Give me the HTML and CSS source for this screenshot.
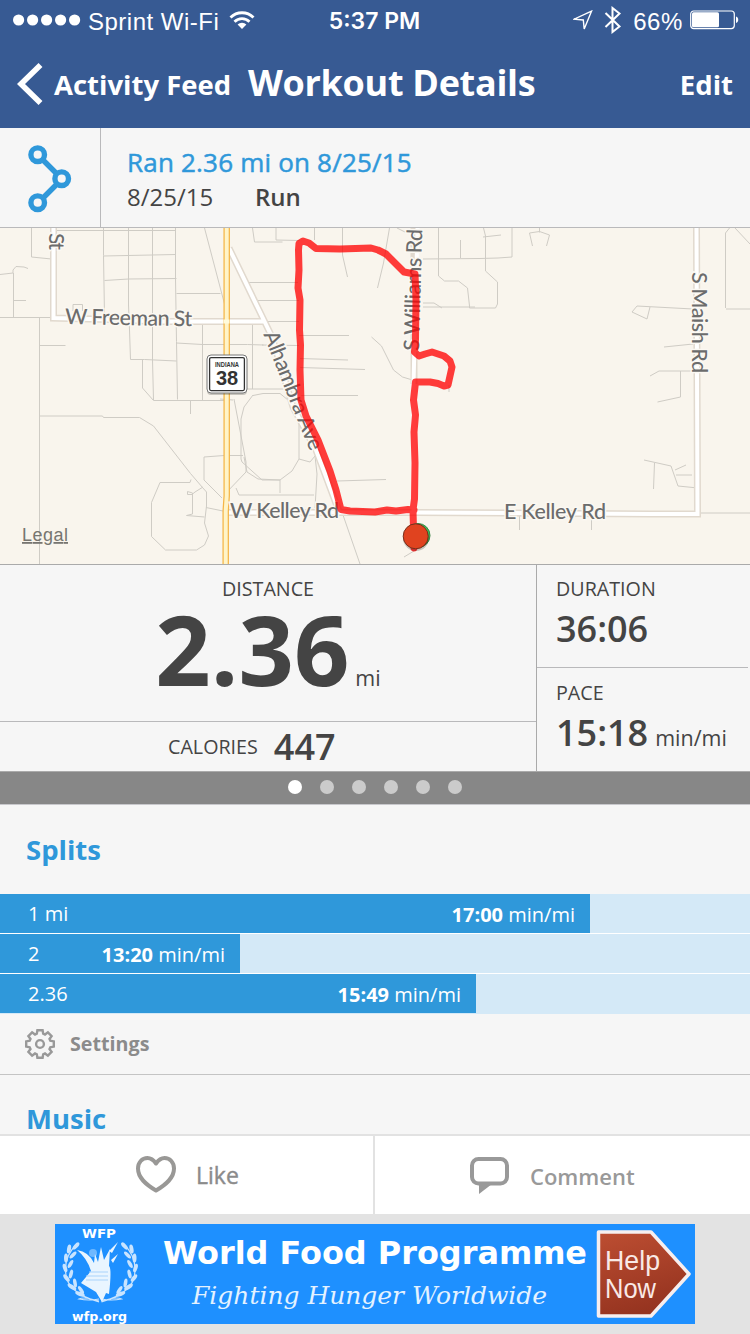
FILE: index.html
```
<!DOCTYPE html>
<html lang="en">
<head>
<meta charset="UTF-8" />
<meta name="viewport" content="width=device-width, initial-scale=1" />
<title>Workout Details</title>
<link rel="stylesheet" href="styles.css">
</head>
<body>

<header>
  <div class="status-bar">
    <div class="status-left">
      <svg class="signal" width="68" height="12" viewBox="0 0 68 12" fill="#fff">
        <circle cx="5.6" cy="6" r="5.6"/><circle cx="19.6" cy="6" r="5.6"/><circle cx="33.6" cy="6" r="5.6"/><circle cx="47.6" cy="6" r="5.6"/><circle cx="61.6" cy="6" r="5.6"/>
      </svg>
      <span class="carrier">Sprint Wi-Fi</span>
      <svg width="26" height="20" viewBox="0 0 26 20" fill="none" stroke="#fff" stroke-width="2.8">
        <path d="M1.5 7.5a16.3 16.3 0 0 1 23 0"/>
        <path d="M5.5 11.8a10.6 10.6 0 0 1 15 0"/>
        <path d="M13 19l-4.4-4.4a6.3 6.3 0 0 1 8.8 0z" fill="#fff" stroke="none"/>
      </svg>
    </div>
    <div class="clock">5:37 PM</div>
    <div class="status-right">
      <svg width="20" height="21" viewBox="0 0 20 21" fill="none" stroke="#fff" stroke-width="1.4">
        <path d="M18.5 1.2L1 9.2l9.3.8.9 9z"/>
      </svg>
      <svg width="18" height="28" viewBox="0 0 18 28" fill="none" stroke="#fff" stroke-width="2">
        <path d="M1.5 7l14 13.5-7 5.5V2l7 5.5L1.5 21"/>
      </svg>
      <span class="percent">66%</span>
      <svg width="49" height="20" viewBox="0 0 49 20">
        <rect x=".7" y="1" width="43.6" height="17.6" rx="3" fill="none" stroke="#fff" stroke-width="1.2"/>
        <rect x="2" y="2.3" width="27" height="15" rx="1.5" fill="#fff"/>
        <path d="M46 6.5c3 .5 3 6 0 6.500z" fill="#fff"/>
      </svg>
    </div>
  </div>
  <nav class="nav-bar">
    <a class="back">
      <svg width="27" height="42" viewBox="0 0 27 42" fill="none" stroke="#fff" stroke-width="5.6">
        <path d="M23.500 2L4 21l19.500 19"/>
      </svg>
      <span>Activity Feed</span>
    </a>
    <h1>Workout Details</h1>
    <a class="edit">Edit</a>
  </nav>
</header>

<section class="summary">
  <div class="summary-icon">
    <svg width="44" height="68" viewBox="0 0 44 68" fill="none" stroke="#2f98da" stroke-width="5.4">
      <path d="M14.500 14.500l14.500 14.500M29 39L14.500 53.500"/>
      <circle cx="9.700" cy="9.700" r="6.800"/><circle cx="33.700" cy="33.700" r="6.800"/><circle cx="9.700" cy="57.700" r="6.800"/>
    </svg>
  </div>
  <div class="summary-text">
    <h2>Ran 2.36 mi on 8/25/15</h2>
    <p><span class="date">8/25/15</span><span class="type">Run</span></p>
  </div>
</section>

<section class="map">
  <svg width="750" height="336" viewBox="0 228 750 336">
    <!-- minor streets -->
    <g class="minor">
      <path d="M31.500 228v29l20 2M0 274.500l13-1.500v-3l3-3.500 8 .5 4 1.500M13.500 273v44M13 300.500h13M0 317.500h52M39.500 318v246M39.500 345.500h26M73 311v-6.500h9.500v6.500"/>
      <path d="M57 230.500h118.500M103.500 228v27.500l1 60M128.500 228v77l1 25 1 29.500M152.500 228v132l1 40M175.500 228v50.500l1 63 1 58M103.500 256l72-1.500M104.500 280.500l24-1.500 48-.5M176.500 293.500h44M204.500 228l20 76M130.500 359.500h14l32 1.500M142.500 360v28l11 12.500h71M176.500 343l26 1.500h45l16 .5M202.500 322v78M190.500 401v13"/>
      <path d="M39.500 416h63l1 1.500h36l14 8.500 37 47.500 12 14 4 4.500v14l-2 17 4 13-4 9-8 5h-31l-14-13.500v-34l8.500-20h30l1-3M203 487l-8 5-3 2.500h-4.500v-3l5 1.500v21l-6 1.500 18 1.500M206 507.500l17 3.500M222 498l-18-18v-23l20-1.500h19M225 494l21-22v-10l-12-63"/>
      <path d="M252.500 228l2 14h28M276 228v12l23.500.5M314.500 228v12M248 282.500h50M255 300.500h44M262 321.500h37M262 345l37 .5M252.500 324v65M225 389h73M299 335.500h50M300 358.500l48 1.500M300 367.500l65 2M300 395.500h58"/>
      <path d="M342.500 228v27l5 22M389.500 228l-6 35-6 25M371.500 337l10 9 12 24 9 7 10 3M220 399l13 1M253 395.500l10-2h17l19 15.500v50l-7 12-12 9h-18l-20-18-1-3v-40l3-12 9-12zM244 457l3 15 11 7 22 1v13M236 488l3 7h75M299 459l11 3 5-6 2 18-2 34M337 481l49-1.500M343 515l17 49M404 557l10-6"/>
      <path d="M397 228l8 4h6M438.500 228v48l6 5h14l9 7 2 18v2h26l2-4v-22l-12-11v-35l-2-8M423 259l57-.5 18-.5 14-1v-29M460.500 240v18M483 237l18-2M423 303h11l8 5M423 307h52M449 385v7"/>
      <path d="M539.500 228v4.500M532.500 246l-3-13 10-1.500 10 3.500-3 11M726 309h24M725.500 308v-75l4-5M735 228l15 16M693 309l-56-3-5 6 15 7 3-12M664 347l29-3M650 376l9-5h33M680.500 371v26l-23 5M644 460l27 6 7 20 20 2M654.500 463l-1 26M675 470l11-5M676 475h16M700 513h50M519.500 515v15M591.500 515v15"/>
    </g>
    <!-- main roads -->
    <g class="road-edge">
      <path d="M53.500 228v90l75 2 25 1.500h110M229 248l43 89 21 70 23 43 24 64M226 512.500h190l234 1.500h47.500L696.500 228M414 564m0-180v-60V228"/>
    </g>
    <g class="road">
      <path d="M53.500 228v90l75 2 25 1.500h110M229 248l43 89 21 70 23 43 24 64M226 512.500h190l234 1.500h47.500L696.500 228M413.500 512V384l4-156"/>
    </g>
    <path class="highway-edge" d="M226.700 228v268l-1 15v53"/>
    <path class="highway" d="M226.700 228v268l-1 15v53"/>
    <path class="crossing" d="M223.500 321.500h6"/>
    <g class="street">
      <text transform="translate(65 324) rotate(1)" textLength="127">W Freeman St</text>
      <text x="230" y="518" textLength="109">W Kelley Rd</text>
      <text x="504" y="518.500" textLength="102">E Kelley Rd</text>
      <text transform="translate(48.500 233) rotate(90)" textLength="17">St</text>
      <text transform="translate(692 272) rotate(90)" textLength="101">S Maish Rd</text>
      <text transform="translate(419 351) rotate(-88.500)" textLength="122">S Williams Rd</text>
      <path id="alhambra" d="M263 334Q283 384 292 407L312 456" fill="none" stroke="none"/>
      <text><textPath href="#alhambra" textLength="127">Alhambra Ave</textPath></text>
    </g>
    <!-- route -->
    <path class="route" d="M414 548L413 510 414.500 499 415 463 414 432 415.500 415 413.500 400 415.500 382 430 382 438 383.500 444 386 448 385 452 367 450 361 444 356 432 352 425 354 419 356 414.500 352 415.500 340 416 300 415 274 404 272 398 266 386 254 378 250 371 248 340 249 316 248.500 309 243 303 241 299 243.500 298.500 250 299 270 298 288 300 300 299.500 330 300.500 345 300 370 301 400 306 416 318 440 330 471 336 490 341 509.500 350 511 375 512 387 510 396 511 408 509.500 414 510"/>
    <g class="shield">
      <rect x="207" y="355.500" width="40" height="39.500" rx="4" fill="#0003"/>
      <rect x="207" y="355" width="40" height="38" rx="4" fill="#fff" stroke="#777" stroke-width="1"/>
      <rect x="209.600" y="357.600" width="34.800" height="33" rx="1.500" fill="#fff" stroke="#333" stroke-width="1.300"/>
      <text class="shield-state" x="227" y="366.800" textLength="24" lengthAdjust="spacingAndGlyphs">INDIANA</text>
      <text class="shield-number" x="227" y="385.300">38</text>
    </g>
    <circle cx="418" cy="535.500" r="12" fill="#35c759" stroke="#388244"/>
    <circle cx="416" cy="538" r="13" fill="#0003"/>
    <circle cx="415.700" cy="536.300" r="12.500" fill="#e0431f" stroke="#76301d"/>
    <text class="legal" x="22" y="541" textLength="46">Legal</text>
  </svg>
</section>

<section class="stats">
  <div class="stats-main">
    <div class="distance">
      <div class="label">DISTANCE</div>
      <div class="big">2.36<span class="unit">mi</span></div>
    </div>
    <div class="calories"><span class="label">CALORIES</span><span class="value">447</span></div>
  </div>
  <div class="stats-side">
    <div class="stat">
      <div class="label">DURATION</div>
      <div class="value">36:06</div>
    </div>
    <div class="stat">
      <div class="label">PACE</div>
      <div class="value">15:18<span class="unit">min/mi</span></div>
    </div>
  </div>
</section>

<div class="pager">
  <i class="dot active"></i><i class="dot"></i><i class="dot"></i><i class="dot"></i><i class="dot"></i><i class="dot"></i>
</div>

<section class="splits">
  <h3>Splits</h3>
  <div class="split"><div class="bar" style="width:590px"><span>1 mi</span><span><b>17:00</b> min/mi</span></div></div>
  <div class="split"><div class="bar" style="width:240px"><span>2</span><span><b>13:20</b> min/mi</span></div></div>
  <div class="split"><div class="bar" style="width:476px"><span>2.36</span><span><b>15:49</b> min/mi</span></div></div>
  <div class="settings">
    <svg width="30" height="30" viewBox="-15 -15 30 30" fill="none" stroke="#999" stroke-width="2.400">
      <path d="M-3.200-10.300L-2.600-13.800H2.600L3.200-10.300 5-9.500 7.900-11.600 11.600-7.900 9.500-5 10.300-3.200 13.800-2.600V2.600L10.300 3.200 9.500 5 11.600 7.900 7.900 11.600 5 9.500 3.200 10.300 2.600 13.800H-2.600L-3.200 10.300-5 9.500-7.900 11.600-11.600 7.900-9.500 5-10.300 3.200-13.800 2.600V-2.600L-10.300-3.200-9.500-5-11.600-7.900-7.900-11.600-5-9.500z"/>
      <circle r="3.900"/>
    </svg>
    <span>Settings</span>
  </div>
</section>

<section class="music">
  <h3>Music</h3>
</section>

<div class="actions">
  <button class="like">
    <svg width="40" height="37" viewBox="0 0 40 37" fill="none" stroke="#999896" stroke-width="4" stroke-linejoin="round">
      <path d="M20 7.500C17.500 4 15 2 11.500 2 6 2 2 6.500 2 12.500 2 22 10 28.500 20 34.500 30 28.500 38 22 38 12.500 38 6.500 34 2 28.500 2 25 2 22.500 4 20 7.500z"/>
    </svg>
    <span>Like</span>
  </button>
  <button class="comment">
    <svg width="39" height="37" viewBox="0 0 39 37">
      <rect x="2" y="2" width="35" height="24.500" rx="6.500" fill="none" stroke="#999" stroke-width="4"/>
      <path d="M9 27h13L9 37z" fill="#999"/>
    </svg>
    <span>Comment</span>
  </button>
</div>

<footer class="ad">
  <svg width="640" height="100" viewBox="0 0 640 100">
    <defs>
      <linearGradient id="help" x1="0" y1="0" x2=".3" y2="1">
        <stop offset="0" stop-color="#bd4e32"/><stop offset="1" stop-color="#963420"/>
      </linearGradient>
      <g id="branch" fill="none" stroke="#c9e4ff">
        <path d="M22 20C7 34 6 57 22 68q6 5 22 10M44 77l-8-2q-8-2-12 0 10 2 20 0" stroke-width="1.200"/>
        <g fill="#c9e4ff" stroke="none">
          <ellipse cx="21" cy="22" rx="2" ry="4.500" transform="rotate(42 21 22)"/>
          <ellipse cx="14" cy="25" rx="2" ry="4.500" transform="rotate(10 14 25)"/>
          <ellipse cx="18" cy="31" rx="1.800" ry="4.500" transform="rotate(45 18 31)"/>
          <ellipse cx="11" cy="34" rx="2" ry="4.500"/>
          <ellipse cx="15.500" cy="40" rx="1.800" ry="4.500" transform="rotate(30 15.500 40)"/>
          <ellipse cx="10" cy="44" rx="2" ry="4.500" transform="rotate(-18 10 44)"/>
          <ellipse cx="16" cy="50" rx="1.800" ry="4.500" transform="rotate(15 16 50)"/>
          <ellipse cx="11.500" cy="54" rx="2" ry="4.500" transform="rotate(-38 11.500 54)"/>
          <ellipse cx="20" cy="59" rx="1.800" ry="4.500" transform="rotate(-10 20 59)"/>
          <ellipse cx="17" cy="63" rx="2" ry="5" transform="rotate(-55 17 63)"/>
          <ellipse cx="26" cy="66" rx="1.800" ry="4.500" transform="rotate(-35 26 66)"/>
          <ellipse cx="25" cy="70" rx="2" ry="5" transform="rotate(-70 25 70)"/>
        </g>
      </g>
    </defs>
    <rect width="640" height="100" fill="#1e90ff"/>
    <use href="#branch"/>
    <use href="#branch" transform="translate(90.500 0) scale(-1 1)"/>
    <g fill="#e9f5ff">
      <path d="M22 26q12 2 17 13l1-9 3 8 3-15 3 13 6-11-1 17q3 2 0 28l-3-1-4 9-6-10-15-9 10-12q-4-13-14-21z"/>
      <path d="M54 27l9-9-6 11zM56 36l7-6-5 9z"/>
      <circle cx="38" cy="29" r="4" opacity=".4"/>
    </g>
    <path d="M34 48h19M31 52h22M31 56h22" stroke="#a9d3fb" stroke-width="1"/>
    <text class="ad-small" x="27" y="13.500" textLength="34" lengthAdjust="spacingAndGlyphs">WFP</text>
    <text class="ad-small" x="17" y="96.500" textLength="55" lengthAdjust="spacingAndGlyphs">wfp.org</text>
    <text class="ad-title" x="108" y="39.500" textLength="424" lengthAdjust="spacingAndGlyphs">World Food Programme</text>
    <text class="ad-sub" x="137" y="80" textLength="355" lengthAdjust="spacingAndGlyphs">Fighting Hunger Worldwide</text>
    <path d="M543.500 8H596l38 42-38 42h-52.500z" fill="url(#help)" stroke="#f7eeee" stroke-width="3.500" stroke-linejoin="round"/>
    <text class="ad-help" x="550" y="46" textLength="55" lengthAdjust="spacingAndGlyphs">Help</text>
    <text class="ad-help" x="550" y="74" textLength="51" lengthAdjust="spacingAndGlyphs">Now</text>
  </svg>
</footer>

</body>
</html>
```
FILE: styles.css
```
* {
  box-sizing: border-box;
}
body {
  font-family: "Open Sans", sans-serif;
  background: #f6f6f6;
  margin: 0;
  color: #444;
  width: 750px;
  height: 1334px;
  overflow: hidden;
}
h1, h2, h3, p {
  margin: 0;
}
svg {
  display: block;
  flex: none;
}
header {
  background: #375a93;
  color: #fff;
  height: 128px;
}
.status-bar {
  display: grid;
  grid-template-columns: 1fr 120px 1fr;
  align-items: center;
  height: 40px;
  padding: 0 11px 0 13px;
  font-family: "Liberation Sans", sans-serif;
  font-size: 24px;
}
.status-left, .status-right {
  display: flex;
  align-items: center;
}
.carrier {
  margin: 3px 10px 0 7px;
  letter-spacing: 0.5px;
}
.clock {
  font-family: Inter, sans-serif;
  font-weight: 600;
  font-size: 23px;
  text-align: center;
  padding: 2px 3px 0 0;
}
.status-right {
  justify-content: flex-end;
}
.status-right svg:nth-child(2) {
  margin: 0 11px;
}
.percent {
  margin: 3px 7px 0 0;
  letter-spacing: 0.6px;
}
.nav-bar {
  display: flex;
  height: 88px;
  padding: 0 17px;
  font-weight: 700;
  white-space: nowrap;
}
.back {
  display: flex;
  width: 231px;
}
.back svg {
  margin-top: 23px;
}
.back span, .edit {
  font-size: 27.5px;
  line-height: 40px;
  padding-top: 25px;
}
.back span {
  margin-left: 10px;
}
.nav-bar h1 {
  font-size: 36px;
  line-height: 44px;
  padding-top: 21px;
  font-weight: 700;
  letter-spacing: -0.3px;
}
.edit {
  margin-left: auto;
}
.summary {
  display: flex;
  height: 100px;
  border-bottom: 1px solid #b9b9bb;
}
.summary-icon {
  width: 101px;
  border-right: 1px solid #b9b9bb;
  padding: 17px 0 0 28px;
}
.summary-text {
  padding: 17px 0 0 26px;
}
.summary h2 {
  color: #2f98da;
  font-size: 26px;
  line-height: 34px;
  font-weight: 400;
  letter-spacing: 0.2px;
  -webkit-text-stroke: 0.5px #2f98da;
}
.summary p {
  font-size: 24px;
  line-height: 36px;
}
.date {
  display: inline-block;
  width: 128px;
}
.type {
  font-weight: 600;
}
.map {
  height: 337px;
  background: #f9f5ed;
  border-bottom: 1px solid #aaa;
}
.minor {
  fill: none;
  stroke: #cfccc5;
  stroke-width: 1;
}
.road-edge, .road, .highway-edge, .highway, .crossing {
  fill: none;
}
.road-edge {
  stroke: #e1d9ce;
  stroke-width: 7;
}
.road {
  stroke: #fff;
  stroke-width: 4;
}
.highway-edge {
  stroke: #f5b547;
  stroke-width: 6.5;
}
.highway {
  stroke: #fff4c8;
  stroke-width: 4;
}
.crossing {
  stroke: #fffbdc;
  stroke-width: 4;
}
.street text {
  font-family: Lato, sans-serif;
  font-size: 21.5px;
  font-weight: 500;
  fill: #6c6c6c;
  stroke: #fbf8f2;
  stroke-width: 3;
  paint-order: stroke;
}
.route {
  fill: none;
  stroke: #f00;
  stroke-opacity: 0.76;
  stroke-width: 7;
  stroke-linejoin: round;
  stroke-linecap: round;
}
.shield text {
  font-family: "Liberation Sans", sans-serif;
  font-weight: bold;
  text-anchor: middle;
  fill: #333;
}
.shield .shield-state {
  font-size: 7px;
}
.shield .shield-number {
  font-size: 20px;
}
.legal {
  font-family: "Liberation Sans", sans-serif;
  font-size: 18px;
  fill: #777570;
  text-decoration: underline;
}
.stats {
  display: flex;
  height: 207px;
  border-bottom: 1px solid #aaa;
}
.label {
  font-size: 19.7px;
  line-height: 28px;
}
.unit {
  font-size: 21.5px;
  font-weight: 400;
}
.value {
  font-size: 36px;
  line-height: 52px;
  font-weight: 600;
}
.value .unit {
  margin-left: 7px;
}
.stats-main {
  width: 537px;
  border-right: 1px solid #aaa;
}
.distance {
  height: 157px;
  padding-top: 10px;
  border-bottom: 1px solid #b9b9bb;
  text-align: center;
}
.big {
  font-size: 97px;
  line-height: 90px;
  font-weight: 700;
}
.big .unit {
  margin-left: 6px;
}
.calories {
  display: flex;
  align-items: center;
  padding-left: 168px;
  height: 49px;
}
.calories .value {
  margin-left: 16px;
}
.stats-side {
  width: 211px;
}
.stat {
  height: 103px;
  padding: 10px 0 0 19px;
  white-space: nowrap;
}
.stat:first-child {
  border-bottom: 1px solid #b9b9bb;
}
.stat + .stat {
  padding-top: 11px;
}
.pager {
  display: flex;
  justify-content: center;
  align-items: center;
  gap: 18px;
  height: 33px;
  padding-bottom: 2px;
  background: #878787;
  border-bottom: 1px solid #c8c8cc;
}
.dot {
  width: 14px;
  height: 14px;
  border-radius: 50%;
  background: #cbcbcb;
}
.dot.active {
  background: #fff;
}
h3 {
  color: #2f98da;
  font-size: 27.5px;
  font-weight: 700;
  padding-left: 26px;
}
.splits h3 {
  height: 89px;
  line-height: 90px;
}
.split {
  height: 40px;
  background: #d4e9f7;
  border-bottom: 1px solid #fff;
}
.split:nth-child(4) {
  border-bottom-color: #d4e9f7;
}
.bar {
  display: flex;
  justify-content: space-between;
  height: 39px;
  padding: 0 15px 0 28px;
  background: #2f98da;
  color: #fff;
  font-size: 20px;
  line-height: 40px;
}
.bar span:last-child {
  line-height: 42px;
}
.settings {
  display: flex;
  align-items: center;
  gap: 15px;
  height: 61px;
  padding: 0 0 1px 25px;
  border-bottom: 1px solid #c4c4c4;
  color: #8b8b8b;
  font-size: 19.7px;
  font-weight: 700;
}
.music {
  height: 59px;
}
.music h3 {
  line-height: 88px;
}
.actions {
  display: flex;
  height: 80px;
  border-top: 2px solid #e2e2e2;
  background: #fff;
}
.actions button {
  display: flex;
  align-items: flex-start;
  border: none;
  background: none;
  font: 400 23px/34px "Open Sans", sans-serif;
  color: #8b8b8b;
  padding: 20px 0 0 136px;
}
.actions .like {
  width: 375px;
  border-right: 2px solid #e2e2e2;
}
.like span {
  margin-left: 20px;
  padding-top: 2px;
  -webkit-text-stroke: 0.4px #8b8b8b;
}
.actions .comment {
  padding: 21px 0 0 95px;
  font-size: 22px;
  font-weight: 600;
  color: #999;
}
.comment span {
  margin-left: 21px;
  padding-top: 2px;
}
.ad {
  height: 120px;
  padding: 10px 55px;
  background: #e3e3e3;
}
.ad text {
  fill: #fff;
}
.ad .ad-small {
  font: bold 13px "DejaVu Sans", sans-serif;
}
.ad .ad-title {
  font: bold 32px "DejaVu Sans", sans-serif;
}
.ad .ad-sub {
  font: italic 25px "DejaVu Serif", serif;
  fill: #e4f2ff;
}
.ad .ad-help {
  font: 27px "Liberation Sans", sans-serif;
  fill: #f9e9e6;
}
```
